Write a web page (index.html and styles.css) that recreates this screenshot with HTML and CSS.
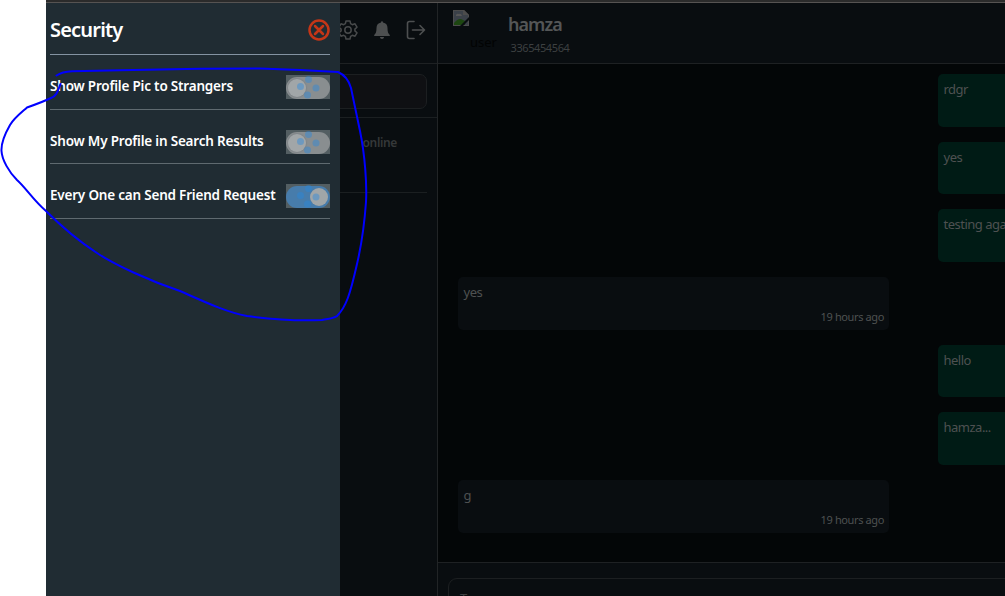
FILE: index.html
```html
<!DOCTYPE html>
<html lang="en">
<head>
<meta charset="utf-8">
<title>Chat</title>
<link rel="stylesheet" href="styles.css">
</head>
<body>
<div class="page">
  <div class="app">
    <aside class="contacts">
      <div class="contacts-head">
        <svg class="gear" viewBox="0 0 20 20"><path d="M8 1h4l.6 2.700 1.700 1 2.700-.9 2 3.400-2.100 1.900v1.800L19 12.800l-2 3.400-2.700-.9-1.700 1L12 19H8l-.6-2.700-1.700-1-2.700.9-2-3.400 2.100-1.900V9.100L1 7.200l2-3.400 2.700.9 1.700-1z"/><circle cx="10" cy="10" r="3.2"/></svg>
        <svg class="bell" viewBox="0 0 16 18"><path d="M7 1.500C7-.2 9-.2 9 1.500 12 2 13.500 4 13.500 7c0 4 .7 5.500 2.300 7v1H.2v-1C1.800 12.500 2.500 11 2.500 7 2.500 4 4 2 7 1.500zM6 16h4c0 2.600-4 2.600-4 0z"/></svg>
        <svg class="exit" viewBox="0 0 20 20"><path d="M8 1.500H3.500Q1.500 1.500 1.500 3.500V16.500Q1.500 18.500 3.500 18.500H8M6.500 10H18.500M14 5.500L18.500 10 14 14.500"/></svg>
      </div>
      <div class="search-row"><div class="search"></div></div>
      <div class="contact"><span class="online">online</span></div>
    </aside>
    <main class="chat">
      <header class="chat-head">
        <div class="avatar">
          <svg class="broken" viewBox="0 0 16 16"><path fill="#4c4c4c" d="M0 0h11l5 5v11H0z"/><path fill="#3b4149" d="M1 1h9v4h5v10H1z"/><path fill="#565656" d="M3 5q1-2 3-1 2-1 3 2H3z"/><path fill="#1d4611" d="M1 15v-2q5-6 9-3l2 1v4z"/><path fill="#4c4c4c" d="M11 0l5 5h-5z"/><path fill="#090d10" d="M16 7v3l-6 6H7z"/></svg>
          <span class="alt">user</span>
        </div>
        <div class="who"><span class="name">hamza</span><span class="phone">3365454564</span></div>
      </header>
      <div class="messages">
        <div class="msg out"><span class="body">rdgr</span></div>
        <div class="msg out"><span class="body">yes</span></div>
        <div class="msg out"><span class="body">testing again</span></div>
        <div class="msg in"><span class="body">yes</span><span class="time">19 hours ago</span></div>
        <div class="msg out"><span class="body">hello</span></div>
        <div class="msg out"><span class="body">hamza...</span></div>
        <div class="msg in"><span class="body">g</span><span class="time">19 hours ago</span></div>
      </div>
      <footer class="composer"><div class="input">Type a message</div></footer>
    </main>
    <section class="drawer">
      <div class="drawer-head">
        <h2>Security</h2>
        <svg class="close" viewBox="0 0 22 22"><circle cx="11" cy="11" r="9.500"/><path d="M7 7l8 8M15 7l-8 8"/></svg>
      </div>
      <div class="option"><span>Show Profile Pic to Strangers</span>
        <div class="toggle"><i class="track"><i class="knob"></i></i><svg class="dots" viewBox="0 0 44 24"><circle cx="22.500" cy="4.500" r="3.500"/><circle cx="14.500" cy="11.500" r="3.500"/><circle cx="30" cy="13" r="3.500"/><circle cx="21.500" cy="20" r="3.500"/></svg></div></div>
      <div class="option"><span>Show My Profile in Search Results</span>
        <div class="toggle"><i class="track"><i class="knob"></i></i><svg class="dots" viewBox="0 0 44 24"><circle cx="22.500" cy="4.500" r="3.500"/><circle cx="14.500" cy="11.500" r="3.500"/><circle cx="30" cy="13" r="3.500"/><circle cx="21.500" cy="20" r="3.500"/></svg></div></div>
      <div class="option"><span>Every One can Send Friend Request</span>
        <div class="toggle on"><i class="track"><i class="knob"></i></i><svg class="dots" viewBox="0 0 44 24"><circle cx="22.500" cy="4.500" r="3.500"/><circle cx="14.500" cy="11.500" r="3.500"/><circle cx="30" cy="13" r="3.500"/><circle cx="21.500" cy="20" r="3.500"/></svg></div></div>
    </section>
  </div>
  <svg class="scribble" viewBox="0 0 1005 596"><path d="M56.500 75.500C60 73 64 71.500 72 71.200L120 70.300 200 68.700 260 68.600 300 70 338 72C345 75 349 81 351 88L360 131C365 155 367 185 366 202C364 230 361 247 357 264C350 295 346 307 337 316C333 319 328 318.500 322 320C300 321 273 319.500 247 316C226 312 205 302 180 291C150 281 115 265 97 253C80 242 64 229 46 211C34 201 26 188 17 180C9 172 2 160 1.500 151C1 143 6 132 10 125C14 118 22 112 27 107.500C34 105 45 101 51 98C57 96 58 90 60.500 84"/></svg>
</div>
</body>
</html>
```
FILE: styles.css
```css
* { box-sizing: border-box; }
body { margin: 0; background: #fff; font-family: "Noto Sans", "Open Sans", sans-serif; }
.page { position: relative; width: 1005px; height: 596px; padding-left: 46px; overflow: hidden; }
.app { position: relative; display: flex; height: 596px; border-top: 2px solid #2b2b2b; background: #030607; overflow: hidden; }
.app::before { content: ""; position: absolute; inset: 0 0 auto; height: 1px; background: #565352; z-index: 3; }
.contacts { width: 392px; flex: none; padding-top: 1px; background: #090d10; border-right: 1px solid #212426; }
.contacts-head { height: 61px; display: flex; justify-content: flex-end; align-items: center; gap: 14px; padding: 0 11px 6px 0; border-bottom: 1px solid #1e2123; }
.contacts-head svg { flex: none; }
.gear { width: 20px; height: 20px; margin-right: 2px; fill: none; stroke: #484a4b; stroke-width: 1.5; stroke-linejoin: round; }
.bell { width: 16px; height: 18px; fill: #4d4f50; margin: 0 2px 0 0; }
.exit { width: 20px; height: 20px; fill: none; stroke: #4d4f50; stroke-width: 1.6; stroke-linejoin: round; stroke-linecap: round; }
.search-row { height: 54px; padding: 10px 10px 0; border-bottom: 1px solid #1b1f21; }
.search { height: 35px; background: #0f1013; border: 1px solid #1c1f21; border-radius: 7px; }
.contact { height: 75px; margin-right: 10px; padding: 16px 30px 0 0; border-bottom: 1px solid #1b1f21; text-align: right; }
.online { display: block; color: #353839; font-size: 12px; line-height: 18px; font-weight: 600; letter-spacing: -.35px; }
.chat { flex: 1; min-width: 0; display: flex; flex-direction: column; padding-top: 1px; }
.chat-head { height: 61px; flex: none; display: flex; background: #090d10; border-bottom: 1px solid #1e2123; padding: 7px 0 0 15px; }
.avatar { width: 55px; }
.broken { width: 16px; height: 16px; display: block; }
.alt { display: block; margin: 7px 0 0 17px; font-size: 13px; line-height: 18px; color: #020303; }
.who { display: flex; flex-direction: column; padding-top: 2px; }
.name { font-size: 18px; line-height: 24px; font-weight: 600; color: #545657; letter-spacing: -.95px; }
.phone { font-size: 11px; line-height: 16px; margin: 4px 0 0 2.500px; color: #3d4041; letter-spacing: -.4px; }
.messages { height: 498px; flex: none; padding: 10px 0 0 20px; display: flex; flex-direction: column; gap: 15px; }
.msg { width: 431px; height: 52.660px; flex: none; border-radius: 5px; padding: 6px 5px 5px 5.500px; display: flex; flex-direction: column; justify-content: space-between; font-size: 13px; line-height: 19px; color: #4e5151; letter-spacing: -.5px; }
.in { background: #090d10; }
.out { margin-left: 480px; background: #001b15; }
.time { align-self: flex-end; font-size: 11px; line-height: 16px; letter-spacing: -.38px; }
.composer { height: 60px; flex: none; background: #090d10; border-top: 1px solid #1e2123; padding: 15px 0 0 10px; }
.input { width: 600px; height: 40px; border: 1px solid #1c1f21; border-radius: 9px; padding: 10px 11px; font-size: 13px; line-height: 18px; color: #3d4041; }
.drawer { position: absolute; left: 0; top: 1px; width: 294px; bottom: 0; padding: 0 10px 0 4px; background: #202c33; color: #fff; z-index: 2; }
.drawer-head { height: 52px; display: flex; justify-content: space-between; align-items: center; border-bottom: 1px solid #8493a2; padding-top: 3px; }
.drawer h2 { margin: 0; font-size: 20px; line-height: 28px; font-weight: 600; letter-spacing: -.8px; }
.close { width: 22px; height: 22px; fill: none; stroke: #c43617; stroke-width: 2.500; stroke-linecap: round; }
.option { display: flex; justify-content: space-between; height: 54.500px; border-bottom: 1px solid #5f6a70; padding-top: 20px; white-space: nowrap; font-size: 13.500px; line-height: 22px; font-weight: 600; letter-spacing: -.2px; }
.toggle { position: relative; width: 44px; height: 24px; flex: none; background: #535e62; overflow: hidden; }
.track { display: block; width: 44px; height: 22px; margin-top: 2px; padding: 2px; border-radius: 11px; background: #898e90; }
.knob { display: block; width: 18px; height: 18px; border-radius: 50%; background: #a1a6a8; box-shadow: 0 0 1px 1px #80868a; }
.on .track { background: #477cab; }
.on .knob { margin-left: 22px; box-shadow: none; }
.dots { position: absolute; inset: 0; width: 44px; height: 24px; fill: #2788df; opacity: .42; }
.scribble { position: absolute; left: 0; top: 0; width: 1005px; height: 596px; z-index: 5; pointer-events: none; fill: none; stroke: #00f; stroke-width: 2; stroke-linecap: round; stroke-linejoin: round; }
```
